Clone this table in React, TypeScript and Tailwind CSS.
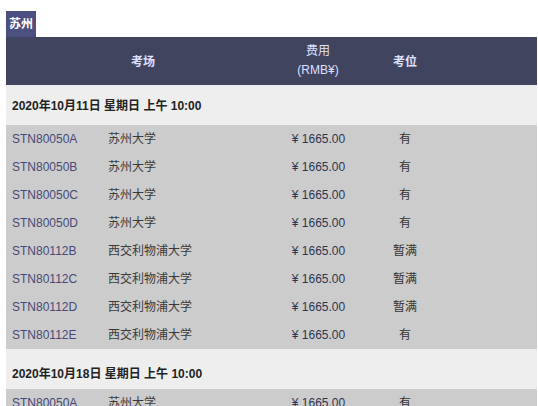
import React from "react";

interface Row {
  code: string;
  venue: string;
  price: string;
  seat: string;
}

interface Session {
  date: string;
  rows: Row[];
}

const suda = "苏州大学";
const xjtlu = "西交利物浦大学";
const fee = "¥ 1665.00";

const sessions: Session[] = [
  {
    date: "2020年10月11日 星期日 上午 10:00",
    rows: [
      { code: "STN80050A", venue: suda, price: fee, seat: "有" },
      { code: "STN80050B", venue: suda, price: fee, seat: "有" },
      { code: "STN80050C", venue: suda, price: fee, seat: "有" },
      { code: "STN80050D", venue: suda, price: fee, seat: "有" },
      { code: "STN80112B", venue: xjtlu, price: fee, seat: "暂满" },
      { code: "STN80112C", venue: xjtlu, price: fee, seat: "暂满" },
      { code: "STN80112D", venue: xjtlu, price: fee, seat: "暂满" },
      { code: "STN80112E", venue: xjtlu, price: fee, seat: "有" },
    ],
  },
  {
    date: "2020年10月18日 星期日 上午 10:00",
    rows: [
      { code: "STN80050A", venue: suda, price: fee, seat: "有" },
      { code: "STN80050B", venue: suda, price: fee, seat: "有" },
    ],
  },
];

const cols = "grid grid-cols-[96px_178px_76px_98px_1fr]";

export default function App() {
  return (
    <div
      className="bg-white w-[538px] h-[406px] overflow-hidden pt-[11px] pl-[6px] pr-px text-[12px]"
      style={{ fontFamily: '"Liberation Sans", "Noto Sans CJK SC", sans-serif' }}
    >
      <div className="inline-flex h-[26px] items-center px-[3px] bg-[#4c5080] text-white font-bold">
        苏州
      </div>

      <div className={`${cols} h-[48px] bg-[#41445f] text-[#dfe0ff]`}>
        <div className="col-span-2 flex items-center justify-center font-bold pt-px">考场</div>
        <div className="flex flex-col items-center justify-center leading-[19px]">
          <span>费用</span>
          <span>(RMB¥)</span>
        </div>
        <div className="flex items-center justify-center font-bold pt-px">考位</div>
        <div />
      </div>

      {sessions.map((s, si) => (
        <div key={s.date}>
          <div
            className={`h-[40px] flex items-center px-[6px] bg-[#eeeeee] text-[#222] font-bold ${
              si > 0 ? "pt-[9px]" : "pt-px"
            }`}
          >
            {s.date}
          </div>
          {s.rows.map((r, i) => (
            <div key={i} className={`${cols} h-[28px] items-center bg-[#cccccc]`}>
              <div className="pl-[6px] text-[#474a78]">{r.code}</div>
              <div className="pl-[6px] text-[#3a3a3a]">{r.venue}</div>
              <div className="text-center text-[#2e3550] pl-px">{r.price}</div>
              <div className="text-center text-[#333]">{r.seat}</div>
              <div />
            </div>
          ))}
        </div>
      ))}
    </div>
  );
}
